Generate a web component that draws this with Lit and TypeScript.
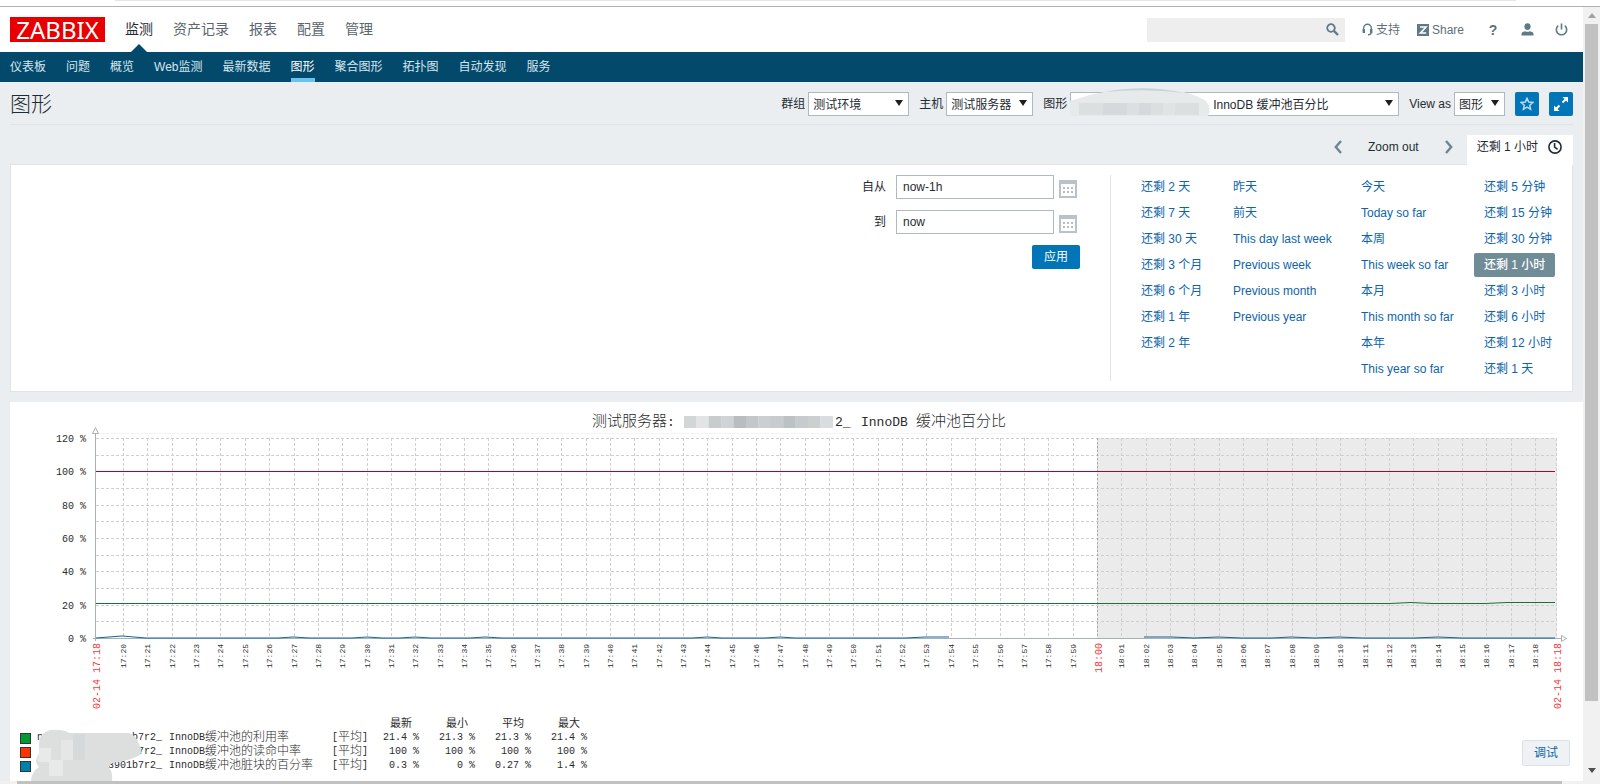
import { LitElement, html, svg, css } from "lit";
import { customElement, state } from "lit/decorators.js";
import { classMap } from "lit/directives/class-map.js";

const MAIN_MENU = ["监测", "资产记录", "报表", "配置", "管理"];
const SUB_MENU = ["仪表板", "问题", "概览", "Web监测", "最新数据", "图形", "聚合图形", "拓扑图", "自动发现", "服务"];
const RANGES: string[][] = [
  ["还剩 2 天", "还剩 7 天", "还剩 30 天", "还剩 3 个月", "还剩 6 个月", "还剩 1 年", "还剩 2 年"],
  ["昨天", "前天", "This day last week", "Previous week", "Previous month", "Previous year"],
  ["今天", "Today so far", "本周", "This week so far", "本月", "This month so far", "本年", "This year so far"],
  ["还剩 5 分钟", "还剩 15 分钟", "还剩 30 分钟", "还剩 1 小时", "还剩 3 小时", "还剩 6 小时", "还剩 12 小时", "还剩 1 天"],
];
const LEGEND = [
  { color: "#009933", lead: "n", host: "b7r2_", item: "缓冲池的利用率", values: ["21.4 %", "21.3 %", "21.3 %", "21.4 %"] },
  { color: "#ff3300", lead: "", host: "7r2_", item: "缓冲池的读命中率", values: ["100 %", "100 %", "100 %", "100 %"] },
  { color: "#0080aa", lead: "", host: "3901b7r2_", item: "缓冲池脏块的百分率", values: ["0.3 %", "0 %", "0.27 %", "1.4 %"] },
];

@customElement("zbx-graph")
class ZbxGraph extends LitElement {
  static styles = css`
    :host { display: block; position: relative; background: #fff; }
    .chart { display: block; width: 100%; height: auto; }
    text { font-family: "Liberation Mono", "Noto Sans CJK SC", monospace; fill: #2b2b2b; }
    .title { font-size: 13px; }
    .title-cjk { font-size: 15px; font-weight: 300; }
    .scale { font-size: 10px; text-anchor: end; }
    .minute { font-size: 8px; }
    .major { font-size: 10px; fill: #f23a3a; }
    .grid { stroke: #cfcfcf; stroke-dasharray: 3 2; shape-rendering: crispEdges; }
    .legend {
      border-collapse: collapse; table-layout: fixed; margin: 1px 0 0 10px; width: 567px;
      font: 10px/14px "Liberation Mono", "Noto Sans CJK SC", monospace; color: #2b2b2b;
    }
    .legend td, .legend th { padding: 0; height: 14px; line-height: 14px; font-weight: 400; white-space: nowrap; text-align: right; }
    .legend th { padding-right: 7px; font-size: 11px; line-height: 12px; }
    .legend .sw { width: 17px; text-align: left; }
    .legend .name { width: 295px; }
    .legend .fn { width: 31px; }
    .line { display: flex; align-items: center; height: 14px; }
    .cjk { font-size: 12px; font-weight: 300; }
    .swatch { display: block; width: 9px; height: 9px; border: 1px solid #333; }
    .host { display: flex; justify-content: space-between; width: 125px; margin-right: 7px; }
    .redact { position: absolute; left: 25px; top: 326px; width: 120px; height: 54px; overflow: visible; }
  `;

  private plot() {
    const left = 86, top = 36, right = 1546, bottom = 236;
    const minute = (i: number) => Math.floor(113.6 + i * 24.345) + 0.5;
    const level = (p: number) => bottom - (p * 200) / 120;
    const label = (i: number) => {
      const m = 20 + i;
      return m < 60 ? `17:${m}` : `18:${String(m - 60).padStart(2, "0")}`;
    };
    const minutes = Array.from({ length: 59 }, (_, i) => i);
    return svg`
      <rect x="1087" y="${top}" width="460" height="200" fill="#ebebeb"></rect>
      <path d="M86 31.5H1546" stroke="#f4f4f4"></path>
      ${Array.from({ length: 12 }, (_, i) => {
        const y = Math.round(level((i + 1) * 10)) + 0.5;
        return svg`<path class="grid" d="M${left} ${y}H${right}"></path>`;
      })}
      ${minutes.map((i) => svg`<path class="grid" d="M${minute(i)} ${top}V${bottom}"></path>`)}
      <path class="grid" d="M1546.5 36V236" stroke="#bbb"></path>
      <path d="M1087.5 36V236" stroke="#a8a8a8" stroke-dasharray="2 2"></path>
      <path d="M85.5 32V239M83 236.5H1551" stroke="#a9b0b3" fill="none"></path>
      <path d="M82.5 31.5L85.5 25.5L88.5 31.5ZM1551.5 233.5L1556.5 236.5L1551.5 239.5Z" fill="#fff" stroke="#a9b0b3"></path>
      ${[0, 20, 40, 60, 80, 100, 120].map((v) => svg`<text class="scale" x="76" y="${Math.round(level(v)) + 4}">${v} %</text>`)}
      ${minutes.map((i) =>
        i === 40
          ? svg`<text class="major" transform="translate(1092 271) rotate(-90)">18:00</text>`
          : svg`<text class="minute" transform="translate(${Math.round(minute(i)) + 2} 266) rotate(-90)">${label(i)}</text>`
      )}
      <text class="major" transform="translate(90 307) rotate(-90)">02-14 17:18</text>
      <text class="major" transform="translate(1551 307) rotate(-90)">02-14 18:18</text>
      <path d="M86 69.5H1545" stroke="#b0002f" fill="none"></path>
      <path d="M86 201.5H1380L1401 200.5L1422 201.5H1475L1497 200.5H1545" stroke="#12713c" fill="none"></path>
      <path d="M86 236L112 234L136 236H268L283 235L300 236H342L357 235L372 236H390L405 235L421 236H460L475 235L492 236H682L697 235L712 236H755L770 235L785 236H895L915 235H939M1134 235H1162L1184 236L1208 235L1232 236H1262L1281 235L1305 236L1329 235L1353 236H1404L1428 235L1452 236H1545"
        stroke="#17658f" fill="none"></path>`;
  }

  render() {
    const blocks = ["#d3d6d7", "#e3e5e5", "#c9cccd", "#d0d3d5", "#b9bdc0", "#c3c7c9", "#cbcfd1", "#c8cccf", "#bcc1c4", "#c8cbcd", "#cccfd0", "#dadddd"];
    return html`
      <svg class="chart" viewBox="0 0 1573 314" role="img" aria-label="InnoDB 缓冲池百分比">
        <text class="title" y="24"><tspan class="title-cjk" x="582">测试服务器</tspan><tspan x="657">:</tspan><tspan x="825">2_</tspan><tspan x="851">InnoDB</tspan><tspan class="title-cjk" x="906">缓冲池百分比</tspan></text>
        ${blocks.map((c, i) => svg`<rect x="${674 + i * 12.4}" y="14" width="12.6" height="12" fill="${c}"></rect>`)}
        ${this.plot()}
      </svg>
      <table class="legend">
        <tr>
          <td class="sw"></td><td class="name"></td><td class="fn"></td>
          ${["最新", "最小", "平均", "最大"].map((h) => html`<th>${h}</th>`)}
        </tr>
        ${LEGEND.map((r) => html`<tr>
          <td><span class="swatch" style="background:${r.color}"></span></td>
          <td><div class="line"><span class="host"><span>${r.lead}</span><span>${r.host}</span></span>InnoDB<span class="cjk">${r.item}</span></div></td>
          <td><div class="line">[<span class="cjk">平均</span>]</div></td>
          ${r.values.map((v) => html`<td>${v}</td>`)}
        </tr>`)}
      </table>
      <svg class="redact" viewBox="0 0 120 54" aria-hidden="true">
        <path d="M4 18Q3 5 15 2Q28 1 34 5H94Q102 8 104 16Q108 22 105 27Q96 32 84 34Q74 34 74 40Q78 43 77 54H-4Q-4 44 4 39Q-2 33 4 26Z" fill="#dddfdf"></path>
        <path d="M4 20H16V32H28V48H14V34H3Z" fill="#e8e9e9"></path>
        <path d="M26 12H38V32H26Z" fill="#e5e7e7"></path>
        <path d="M38 6H50V32H38Z" fill="#d6d9da"></path>
      </svg>`;
  }
}

@customElement("app-root")
class AppRoot extends LitElement {
  @state() private range = "还剩 1 小时";

  static styles = css`
    :host {
      display: grid; grid-template: 7px minmax(0, 1fr) 3px / minmax(0, 1fr) 17px; height: 100vh; overflow: hidden;
      background: #ebeef0; color: #1f2c33; font: 12px/24px "Liberation Sans", "Noto Sans CJK SC", sans-serif;
    }
    * { box-sizing: border-box; }
    a { color: inherit; text-decoration: none; }
    svg { display: block; }
    button, input, select { font: inherit; color: inherit; margin: 0; border-radius: 0; }
    button { cursor: pointer; padding: 0; border: 0; background: none; }
    .frame { grid-column: 1 / 3; padding: 0 84px 0 115px; background: #fff; border-bottom: 1px solid #b3b3ac; }
    .frame-edge { height: 1px; background: #e6e6e6; }
    .page { overflow: hidden; }
    .vbar { background: #f1f1f1; display: flex; flex-direction: column; align-items: center; padding: 6px 0 8px; }
    .vthumb { width: 13px; height: 677px; margin: 6px 0 auto; background: #c1c1c1; }
    .hbar { grid-column: 1 / 3; background: #f1f1f1; padding: 0 38px 0 17px; }
    .hthumb { height: 3px; background: #c1c1c1; }

    .top { display: flex; align-items: center; height: 45px; padding: 0 10px; background: #fff; }
    .logo { width: 95px; height: 25px; background: #e80000; color: #fff; font: 24px/25px "Noto Sans", sans-serif; text-align: center; }
    .menu { display: flex; gap: 20px; margin-left: 20px; font-size: 14px; color: #5a666c; align-self: stretch; }
    .menu a { position: relative; line-height: 44px; }
    .menu .current { color: #1f2c33; }
    .menu .current::after {
      content: ""; position: absolute; bottom: 0; left: 6px;
      border: 8px solid transparent; border-top: 0; border-bottom-color: #02496b;
    }
    .tools { display: flex; align-items: center; gap: 17px; margin-left: auto; color: #5f6f77; }
    .search { display: flex; align-items: center; width: 198px; height: 24px; padding-right: 6px; background: #eee; }
    .search input { flex: 1; min-width: 0; height: 24px; border: 0; background: none; outline: none; }
    .tools a { display: flex; align-items: center; gap: 3px; }
    .round { display: flex; gap: 10px; }
    .tools .round a { width: 24px; height: 24px; justify-content: center; font-size: 14px; font-weight: 700; }
    .sub { display: flex; gap: 20px; height: 30px; padding: 0 10px; background: #02496b; color: #d6e6ee; }
    .sub a { line-height: 30px; white-space: nowrap; }
    .sub .current { color: #fff; border-bottom: 4px solid #69c3ec; }

    .head { display: flex; align-items: flex-start; margin: 0 10px; padding: 10px 0 8px; border-bottom: 1px solid #dfe4e7; }
    h1 { margin: 0; font-size: 21px; line-height: 24px; font-weight: 300; }
    .controls { display: flex; gap: 10px; margin-left: auto; }
    .field { display: flex; gap: 3px; }
    .pick { position: relative; }
    .pick::after {
      content: ""; position: absolute; right: 6px; top: 8px; pointer-events: none;
      border: 4px solid transparent; border-bottom: 0; border-top: 6px solid #1f1f1f;
    }
    select { appearance: none; display: block; width: 100%; height: 24px; padding: 0 0 0 4px; border: 1px solid #acbbc2; background: #fff; outline: none; }
    .w-group { width: 101px; }
    .w-host { width: 87px; }
    .w-graph { width: 329px; }
    .w-graph select { padding-left: 142px; }
    .w-view { width: 51px; }
    .mask { position: absolute; left: 0; top: -4px; }
    .square { display: grid; place-items: center; width: 24px; height: 24px; background: #0275b8; border-radius: 2px; }

    .tabs { display: flex; justify-content: flex-end; padding: 10px 10px 0; color: #1f2c33; }
    .nav { display: flex; gap: 26px; margin-right: 14px; height: 24px; align-items: center; }
    .tab { display: flex; align-items: flex-start; gap: 10px; height: 30px; margin-bottom: -1px; padding: 0 11px 0 10px; background: #fff; position: relative; }
    .tab svg { margin-top: 5px; }
    .filter { display: flex; justify-content: flex-end; margin: 0 10px 10px; padding: 10px 0; background: #fff; border: 1px solid #dfe4e7; }
    .period { display: grid; grid-template-columns: auto 158px 21px; grid-auto-rows: 24px; gap: 11px 5px; margin-right: 30px; }
    .period label { padding-right: 5px; text-align: right; }
    .period input { height: 24px; padding: 0 6px; border: 1px solid #acbbc2; outline: none; background: #fff; }
    .cal { align-self: end; justify-self: start; height: 20px; }
    .apply { grid-column: 2 / 4; justify-self: end; width: 48px; background: #0275b8; color: #fff; border-radius: 2px; }
    .ranges { display: grid; grid-template-columns: 92px 128px 123px 98px; padding-left: 20px; border-left: 1px solid #dfe4e7; color: #0d65a8; }
    .col { display: flex; flex-direction: column; align-items: flex-start; gap: 2px; }
    .col a { padding: 0 10px; white-space: nowrap; }
    .col .selected { background: #708c96; color: #fff; border-radius: 2px; font-weight: 500; }

    .result { position: relative; margin-left: 10px; height: 400px; background: #fff; }
    .debug {
      position: absolute; right: 13px; top: 338px; width: 48px; height: 26px;
      background: #eef2f5; border: 1px solid #d9e2e7; border-radius: 2px; color: #0d65a8;
    }
  `;

  private select(id: string, label: string, value: string, width: string, mask: unknown = "") {
    return html`<div class="field">
      <label for=${id}>${label}</label>
      <div class="pick ${width}"><select id=${id}><option>${value}</option></select>${mask}</div>
    </div>`;
  }

  private period(id: string, label: string, value: string) {
    return html`<label for=${id}>${label}</label>
      <input id=${id} type="text" .value=${value} />
      <button class="cal" aria-label="日历">
        <svg width="18" height="18" viewBox="0 0 18 18">
          <path d="M1 1H17V17H1Z" fill="#fff" stroke="#b9c2c6" stroke-width="2"></path>
          <path d="M0 0H18V4H0Z" fill="#b9c2c6"></path>
          <path d="M4 8H14M4 12H14" stroke="#b4bec3" stroke-width="2" stroke-dasharray="2 2"></path>
        </svg>
      </button>`;
  }

  render() {
    const mask = html`<svg class="mask" width="142" height="30" viewBox="0 0 142 30" aria-hidden="true">
      <path d="M0 13Q36 0 76 0Q118 1 136 13Q142 20 138 28H0Z" fill="#e6eaeb"></path>
      <path d="M34 4Q76 -4 114 5Q76 0 34 4Z" fill="#c7d3da"></path>
      <path d="M9 15H129V27H9Z" fill="#dcdfe0"></path>
      <path d="M33 15H57V27H33ZM69 15H81V27H69Z" fill="#d6d9db"></path>
      <path d="M93 15H105V27H93Z" fill="#e1e4e5"></path>
    </svg>`;
    return html`
      <div class="frame"><div class="frame-edge"></div></div>
      <div class="page">
        <header class="top">
          <a class="logo" href="#">ZABBIX</a>
          <nav class="menu">
            ${MAIN_MENU.map((m, i) => html`<a href="#" class=${classMap({ current: i === 0 })}>${m}</a>`)}
          </nav>
          <div class="tools">
            <div class="search">
              <input type="text" aria-label="搜索" />
              <svg width="13" height="13" viewBox="0 0 13 13" fill="none" stroke="#5f7a87">
                <circle cx="5" cy="5" r="3.8" stroke-width="1.8"></circle><path d="M8 8L12 12" stroke-width="2.4"></path>
              </svg>
            </div>
            <a href="#">
              <svg width="11" height="13" viewBox="0 0 11 13" fill="none" stroke="#5f7a87">
                <path d="M1.6 8V5.5A3.9 4.2 0 0 1 9.4 5.5V9.5Q9 11.8 6 11.8" stroke-width="1.4"></path>
                <path d="M1.8 6V10M9.2 6V10" stroke-width="2.4"></path>
              </svg>支持</a>
            <a href="#">
              <svg width="12" height="12" viewBox="0 0 12 12"><path d="M0 0H12V12H0Z" fill="#5f7a87"></path>
                <path d="M3 3H9L3.4 9H9.2" fill="none" stroke="#fff" stroke-width="1.6"></path></svg>Share</a>
            <div class="round">
              <a href="#" aria-label="帮助">?</a>
              <a href="#" aria-label="用户">
                <svg width="13" height="13" viewBox="0 0 13 13" fill="#5f7a87"><ellipse cx="6.5" cy="3.6" rx="3.1" ry="3.4"></ellipse>
                  <path d="M.5 12.5V10.5Q1 8.8 4.2 8.2Q6.5 9.4 8.8 8.2Q12 8.8 12.5 10.5V12.5Z"></path></svg>
              </a>
              <a href="#" aria-label="退出">
                <svg width="13" height="13" viewBox="0 0 13 13" fill="none" stroke="#5f7a87" stroke-width="1.6"><path d="M6.5 .5V6.5M3.2 2.6A5.2 5.2 0 1 0 9.8 2.6"></path></svg>
              </a>
            </div>
          </div>
        </header>
        <nav class="sub">
          ${SUB_MENU.map((m) => html`<a href="#" class=${classMap({ current: m === "图形" })}>${m}</a>`)}
        </nav>
        <div class="head">
          <h1>图形</h1>
          <div class="controls">
            ${this.select("group", "群组", "测试环境", "w-group")}
            ${this.select("host", "主机", "测试服务器", "w-host")}
            ${this.select("graph", "图形", "InnoDB 缓冲池百分比", "w-graph", mask)}
            ${this.select("view", "View as", "图形", "w-view")}
            <button class="square" aria-label="收藏">
              <svg width="14" height="14" viewBox="0 0 14 14" fill="none" stroke="#b5dcf3" stroke-width="1.5"><path d="M7 1.3L8.7 5.1L12.8 5.5L9.7 8.2L10.6 12.3L7 10.2L3.4 12.3L4.3 8.2L1.2 5.5L5.3 5.1Z"></path></svg>
            </button>
            <button class="square" aria-label="全屏">
              <svg width="16" height="16" viewBox="0 0 16 16" fill="#fff" stroke="#fff"><path d="M9.5 1H15V6.5ZM1 9.5V15H6.5Z" stroke="none"></path><path d="M9.5 6.5L12.5 3.5M3.5 12.5L6.5 9.5" stroke-width="2"></path></svg>
            </button>
          </div>
        </div>
        <div class="tabs">
          <div class="nav">
            <button aria-label="向前"><svg width="8" height="14" viewBox="0 0 8 14" fill="none" stroke="#6b8691" stroke-width="2.4"><path d="M7 1L1.8 7L7 13"></path></svg></button>
            <button>Zoom out</button>
            <button aria-label="向后"><svg width="8" height="14" viewBox="0 0 8 14" fill="none" stroke="#6b8691" stroke-width="2.4"><path d="M1 1L6.2 7L1 13"></path></svg></button>
          </div>
          <a class="tab" href="#">${this.range}
            <svg width="14" height="14" viewBox="0 0 14 14" fill="none" stroke="#1f2c33" stroke-width="1.6"><circle cx="7" cy="7" r="6.1"></circle><path d="M6.6 3V7.2L9.6 9.4"></path></svg>
          </a>
        </div>
        <section class="filter">
          <div class="period">
            ${this.period("from", "自从", "now-1h")}
            ${this.period("to", "到", "now")}
            <button class="apply">应用</button>
          </div>
          <div class="ranges">
            ${RANGES.map((c) => html`<div class="col">${c.map((r) => html`<a href="#"
              class=${classMap({ selected: r === this.range })}
              @click=${(e: Event) => { e.preventDefault(); this.range = r; }}>${r}</a>`)}</div>`)}
          </div>
        </section>
        <main class="result">
          <zbx-graph></zbx-graph>
          <button class="debug">调试</button>
        </main>
      </div>
      <div class="vbar" aria-hidden="true">
        <svg width="8" height="5" viewBox="0 0 8 5"><path d="M0 5L4 0L8 5Z" fill="#a3a3a3"></path></svg>
        <div class="vthumb"></div>
        <svg width="8" height="5" viewBox="0 0 8 5"><path d="M0 0L4 5L8 0Z" fill="#505050"></path></svg>
      </div>
      <div class="hbar" aria-hidden="true"><div class="hthumb"></div></div>`;
  }
}
